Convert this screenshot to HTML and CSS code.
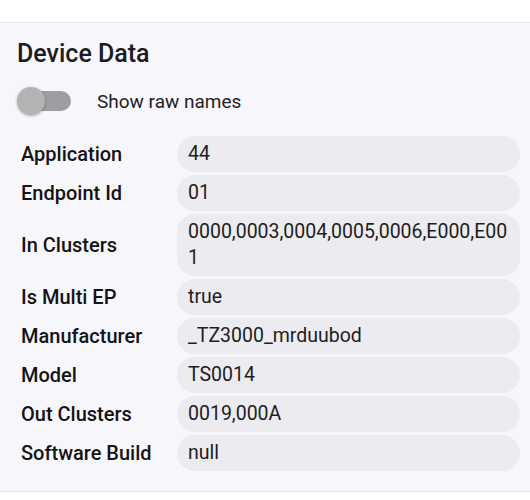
FILE: index.html
```html
<!DOCTYPE html>
<html>
<head>
<meta charset="utf-8">
<link rel="stylesheet" href="styles.css">
</head>
<body>
<div class="top"></div>
<section class="card">
  <h2 class="title">Device Data</h2>
  <div class="toggle-row">
    <span class="switch"><span class="track"></span><span class="thumb"></span></span>
    <span class="toggle-label">Show raw names</span>
  </div>
  <div class="grid">
    <div class="label">Application</div><div class="value">44</div>
    <div class="label">Endpoint Id</div><div class="value">01</div>
    <div class="label">In Clusters</div><div class="value">0000,0003,0004,0005,0006,E000,E001</div>
    <div class="label">Is Multi EP</div><div class="value">true</div>
    <div class="label">Manufacturer</div><div class="value">_TZ3000_mrduubod</div>
    <div class="label">Model</div><div class="value">TS0014</div>
    <div class="label">Out Clusters</div><div class="value">0019,000A</div>
    <div class="label">Software Build</div><div class="value">null</div>
  </div>
</section>
</body>
</html>
```
FILE: styles.css
```css
html, body {
  margin: 0;
  padding: 0;
  background: #ffffff;
  font-family: Roboto, "Noto Sans", sans-serif;
  color: #1c1b1f;
}
.top {
  height: 22px;
  background: #ffffff;
}
.card {
  background: #f7f7fb;
  border-top: 1px solid #e7e7ea;
  border-bottom: 1px solid #e4e4e7;
  padding: 16px 10px 20px 17px;
}
.title {
  margin: 0;
  font-size: 25px;
  font-weight: 500;
  line-height: 30px;
}
.toggle-row {
  display: flex;
  align-items: center;
  height: 36px;
  margin-top: 14px;
}
.switch {
  position: relative;
  width: 54px;
  height: 30px;
  flex: none;
}
.track {
  position: absolute;
  left: 4px;
  right: 0;
  top: 5px;
  height: 20px;
  border-radius: 10px;
  background: #9e9da4;
}
.thumb {
  position: absolute;
  left: 0;
  top: 1px;
  width: 28px;
  height: 28px;
  border-radius: 50%;
  background: #b3b3b3;
  box-shadow: 0 1px 3px rgba(0,0,0,0.3);
}
.toggle-label {
  margin-left: 26px;
  font-size: 19px;
  color: #222226;
}
.grid {
  margin-top: 17px;
  display: grid;
  grid-template-columns: 160px 1fr;
  row-gap: 3px;
}
.label {
  display: flex;
  align-items: center;
  padding-left: 4px;
  font-size: 20px;
  font-weight: 500;
  color: #141316;
}
.value {
  background: #ecebf0;
  border-radius: 18px;
  padding: 5px 12px 5px 11px;
  font-size: 19.5px;
  line-height: 26px;
  color: #1e1d21;
  word-break: break-all;
}
```
